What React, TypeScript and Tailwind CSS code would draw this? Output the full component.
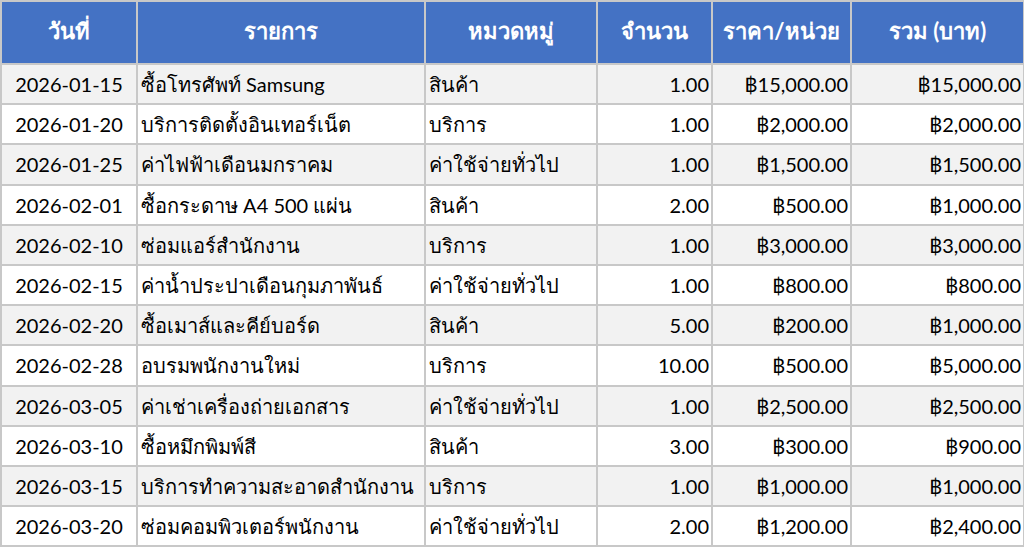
const rows = [
  { date: "2026-01-15", item: "ซื้อโทรศัพท์ Samsung", cat: "สินค้า", qty: "1.00", price: "฿15,000.00", total: "฿15,000.00" },
  { date: "2026-01-20", item: "บริการติดตั้งอินเทอร์เน็ต", cat: "บริการ", qty: "1.00", price: "฿2,000.00", total: "฿2,000.00" },
  { date: "2026-01-25", item: "ค่าไฟฟ้าเดือนมกราคม", cat: "ค่าใช้จ่ายทั่วไป", qty: "1.00", price: "฿1,500.00", total: "฿1,500.00" },
  { date: "2026-02-01", item: "ซื้อกระดาษ A4 500 แผ่น", cat: "สินค้า", qty: "2.00", price: "฿500.00", total: "฿1,000.00" },
  { date: "2026-02-10", item: "ซ่อมแอร์สำนักงาน", cat: "บริการ", qty: "1.00", price: "฿3,000.00", total: "฿3,000.00" },
  { date: "2026-02-15", item: "ค่าน้ำประปาเดือนกุมภาพันธ์", cat: "ค่าใช้จ่ายทั่วไป", qty: "1.00", price: "฿800.00", total: "฿800.00" },
  { date: "2026-02-20", item: "ซื้อเมาส์และคีย์บอร์ด", cat: "สินค้า", qty: "5.00", price: "฿200.00", total: "฿1,000.00" },
  { date: "2026-02-28", item: "อบรมพนักงานใหม่", cat: "บริการ", qty: "10.00", price: "฿500.00", total: "฿5,000.00" },
  { date: "2026-03-05", item: "ค่าเช่าเครื่องถ่ายเอกสาร", cat: "ค่าใช้จ่ายทั่วไป", qty: "1.00", price: "฿2,500.00", total: "฿2,500.00" },
  { date: "2026-03-10", item: "ซื้อหมึกพิมพ์สี", cat: "สินค้า", qty: "3.00", price: "฿300.00", total: "฿900.00" },
  { date: "2026-03-15", item: "บริการทำความสะอาดสำนักงาน", cat: "บริการ", qty: "1.00", price: "฿1,000.00", total: "฿1,000.00" },
  { date: "2026-03-20", item: "ซ่อมคอมพิวเตอร์พนักงาน", cat: "ค่าใช้จ่ายทั่วไป", qty: "2.00", price: "฿1,200.00", total: "฿2,400.00" },
];

const headers = ["วันที่", "รายการ", "หมวดหมู่", "จำนวน", "ราคา/หน่วย", "รวม (บาท)"];

export default function App() {
  return (
    <div className="w-[1024px] h-[548px] bg-white overflow-hidden" style={{ fontFamily: "Lato, 'Noto Sans', sans-serif" }}>
      <table className="table-fixed border-collapse w-[1023px] text-[20px] text-black">
        <colgroup>
          <col className="w-[136px]" />
          <col className="w-[288px]" />
          <col className="w-[172px]" />
          <col className="w-[115px]" />
          <col className="w-[139px]" />
          <col className="w-[173px]" />
        </colgroup>
        <thead>
          <tr className="h-[63px] bg-[#4472c4]">
            {headers.map((h) => (
              <th key={h} className="border-2 border-[#c8c8c8] text-white font-bold text-[22px] text-center align-middle px-1 pb-[4px] whitespace-nowrap">
                {h}
              </th>
            ))}
          </tr>
        </thead>
        <tbody>
          {rows.map((r, i) => (
            <tr key={r.date} className={`h-[40.2px] ${i % 2 === 0 ? "bg-[#f2f2f2]" : "bg-white"}`}>
              <td className="border-2 border-[#c8c8c8] text-center align-middle whitespace-nowrap">{r.date}</td>
              <td className="border-2 border-[#c8c8c8] pl-[3px] align-middle whitespace-nowrap overflow-hidden">{r.item}</td>
              <td className="border-2 border-[#c8c8c8] pl-[3px] align-middle whitespace-nowrap">{r.cat}</td>
              <td className="border-2 border-[#c8c8c8] pr-[2px] text-right align-middle whitespace-nowrap">{r.qty}</td>
              <td className="border-2 border-[#c8c8c8] pr-[2px] text-right align-middle whitespace-nowrap">{r.price}</td>
              <td className="border-2 border-[#c8c8c8] pr-[2px] text-right align-middle whitespace-nowrap">{r.total}</td>
            </tr>
          ))}
        </tbody>
      </table>
    </div>
  );
}
